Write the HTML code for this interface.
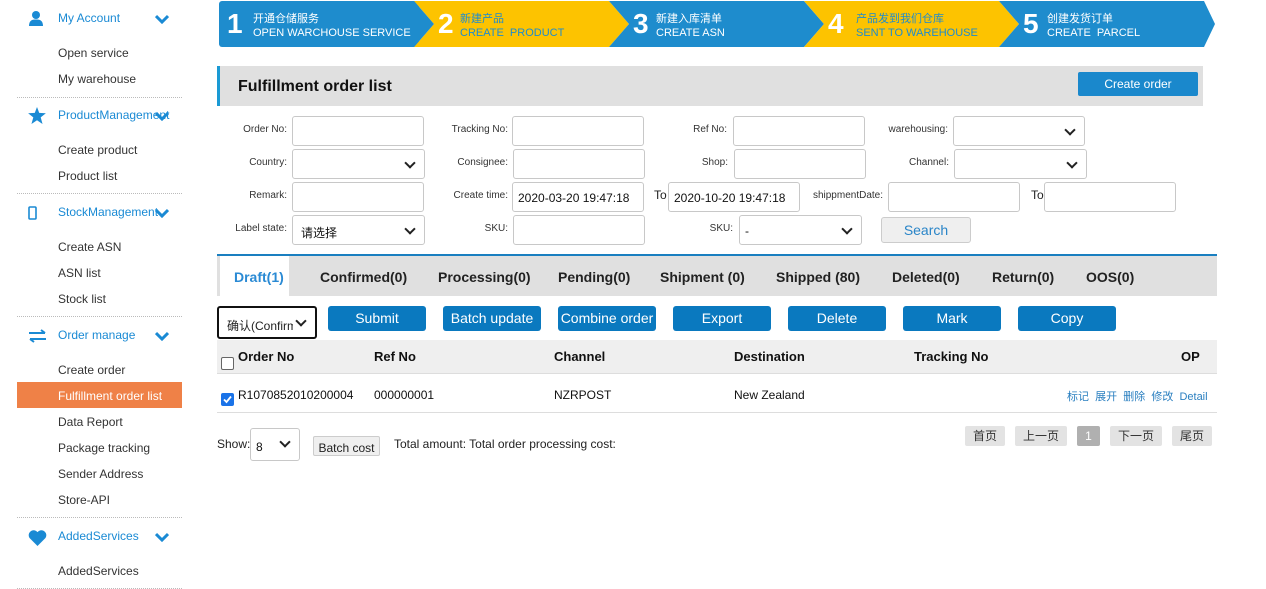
<!DOCTYPE html>
<html><head><meta charset="utf-8"><style>
*{box-sizing:border-box;margin:0;padding:0}
body{width:1266px;height:589px;position:relative;background:#fff;font-family:"Liberation Sans","Noto Sans CJK SC",sans-serif;color:#222;overflow:hidden;font-size:12px}
.a{position:absolute;white-space:nowrap}
.hd{color:#1a8ad4;font-size:12px}
.sub{font-size:12px;color:#333;left:58px}
.dot{position:absolute;left:17px;width:165px;border-top:1px dotted #bbb;height:0}
.chev{position:absolute;left:155px}
.lbl{font-size:10px;color:#333;text-align:right}
.inp{position:absolute;height:30px;border:1px solid #c8c8c8;border-radius:3px;background:#fff;font-size:12px;padding:8px 5px;color:#111;white-space:nowrap;overflow:hidden}
.sel:after{content:"";position:absolute;right:10px;top:9px;width:6px;height:6px;border-right:2px solid #222;border-bottom:2px solid #222;transform:rotate(45deg)}
.tab{position:absolute;top:269px;font-size:14px;font-weight:bold;color:#222}
.btn{position:absolute;top:306px;height:25px;width:98px;background:#0a79bf;color:#fff;border-radius:3px;font-size:14px;text-align:center;line-height:25px}
.th{position:absolute;top:349px;font-size:13px;font-weight:bold;color:#111}
.td{position:absolute;top:388px;font-size:12px;color:#111}
.pg{position:absolute;top:426px;height:20px;background:#e3e3e3;border-radius:2px;font-size:12px;text-align:center;line-height:20px;color:#333}
.op{color:#2a7fc0;font-size:11px}
</style></head><body>

<svg class="a" style="left:28px;top:10px" width="16" height="16" viewBox="0 0 16 16"><circle cx="8" cy="5" r="4" fill="#1a8ad4"/><path d="M1 16 Q1 9 8 9.5 Q15 9 15 16Z" fill="#1a8ad4"/></svg>
<div class="a hd" style="left:58px;top:11px">My Account</div>
<svg class="chev" style="top:14px" width="14" height="10"><path d="M1 2 L7 8 L13 2" stroke="#1a8ad4" stroke-width="3" fill="none"/></svg>
<div class="a sub" style="top:46px">Open service</div>
<div class="a sub" style="top:72px">My warehouse</div>
<div class="dot" style="top:97px"></div>

<svg class="a" style="left:28px;top:107px" width="18" height="17" viewBox="0 0 24 23"><path d="M12 0 L15 8 L24 8.5 L17 14 L19.5 23 L12 18 L4.5 23 L7 14 L0 8.5 L9 8Z" fill="#1a8ad4"/></svg>
<div class="a hd" style="left:58px;top:108px">ProductManagement</div>
<svg class="chev" style="top:111px" width="14" height="10"><path d="M1 2 L7 8 L13 2" stroke="#1a8ad4" stroke-width="3" fill="none"/></svg>
<div class="a sub" style="top:143px">Create product</div>
<div class="a sub" style="top:169px">Product list</div>
<div class="dot" style="top:193px"></div>

<svg class="a" style="left:28px;top:206px" width="9" height="14"><rect x="1" y="1" width="7" height="12" rx="1" fill="none" stroke="#1a8ad4" stroke-width="1.6"/></svg>
<div class="a hd" style="left:58px;top:205px">StockManagement</div>
<svg class="chev" style="top:208px" width="14" height="10"><path d="M1 2 L7 8 L13 2" stroke="#1a8ad4" stroke-width="3" fill="none"/></svg>
<div class="a sub" style="top:240px">Create ASN</div>
<div class="a sub" style="top:266px">ASN list</div>
<div class="a sub" style="top:292px">Stock list</div>
<div class="dot" style="top:316px"></div>

<svg class="a" style="left:28px;top:329px" width="19" height="14"><path d="M1 4 H17 M13 1 L17 4 M18 10 H2 M6 13 L2 10" stroke="#1a8ad4" stroke-width="2" fill="none"/></svg>
<div class="a hd" style="left:58px;top:328px">Order manage</div>
<svg class="chev" style="top:331px" width="14" height="10"><path d="M1 2 L7 8 L13 2" stroke="#1a8ad4" stroke-width="3" fill="none"/></svg>
<div class="a sub" style="top:363px">Create order</div>
<div class="a" style="left:17px;top:382px;width:165px;height:26px;background:#ef8147"></div>
<div class="a sub" style="top:389px;color:#fff">Fulfillment order list</div>
<div class="a sub" style="top:415px">Data Report</div>
<div class="a sub" style="top:441px">Package tracking</div>
<div class="a sub" style="top:467px">Sender Address</div>
<div class="a sub" style="top:493px">Store-API</div>
<div class="dot" style="top:517px"></div>

<svg class="a" style="left:28px;top:529px" width="19" height="17" viewBox="0 0 24 22"><path d="M12 22 L2 12 A6 6 0 0 1 12 4 A6 6 0 0 1 22 12Z" fill="#1a8ad4"/></svg>
<div class="a hd" style="left:58px;top:529px">AddedServices</div>
<svg class="chev" style="top:532px" width="14" height="10"><path d="M1 2 L7 8 L13 2" stroke="#1a8ad4" stroke-width="3" fill="none"/></svg>
<div class="a sub" style="top:564px">AddedServices</div>
<div class="dot" style="top:588px"></div>

<svg class="a" style="left:219px;top:1px" width="998" height="47">
<rect x="0" y="0" width="200" height="46" rx="3" fill="#1e8ccd"/>
<polygon points="195,0 390,0 410,23 390,46 195,46 215,23" fill="#fdc300"/>
<polygon points="180,0 195,0 215,23 195,46 180,46" fill="#1e8ccd"/>
<polygon points="390,0 585,0 605,23 585,46 390,46 410,23" fill="#1e8ccd"/>
<polygon points="585,0 780,0 800,23 780,46 585,46 605,23" fill="#fdc300"/>
<polygon points="780,0 985,0 996,23 985,46 780,46 800,23" fill="#1e8ccd"/>
</svg>
<div class="a" style="left:227px;top:8px;font-size:28px;font-weight:bold;color:#fff">1</div>
<div class="a" style="left:253px;top:12px;font-size:11px;color:#fff;line-height:14px">开通仓储服务<br>OPEN WARCHOUSE SERVICE</div>
<div class="a" style="left:438px;top:8px;font-size:28px;font-weight:bold;color:#fff">2</div>
<div class="a" style="left:460px;top:12px;font-size:11px;color:#1e8ccd;line-height:14px">新建产品<br>CREATE&nbsp; PRODUCT</div>
<div class="a" style="left:633px;top:8px;font-size:28px;font-weight:bold;color:#fff">3</div>
<div class="a" style="left:656px;top:12px;font-size:11px;color:#fff;line-height:14px">新建入库清单<br>CREATE ASN</div>
<div class="a" style="left:828px;top:8px;font-size:28px;font-weight:bold;color:#fff">4</div>
<div class="a" style="left:856px;top:12px;font-size:11px;color:#1e8ccd;line-height:14px">产品发到我们仓库<br>SENT TO WAREHOUSE</div>
<div class="a" style="left:1023px;top:8px;font-size:28px;font-weight:bold;color:#fff">5</div>
<div class="a" style="left:1047px;top:12px;font-size:11px;color:#fff;line-height:14px">创建发货订单<br>CREATE&nbsp; PARCEL</div>

<div class="a" style="left:217px;top:66px;width:986px;height:40px;background:#e0e0e0;border-left:3px solid #1a9ad4"></div>
<div class="a" style="left:238px;top:78px;font-size:16px;font-weight:bold;color:#111">Fulfillment order list</div>
<div class="a" style="left:1078px;top:72px;width:120px;height:24px;background:#1a88cc;color:#fff;font-size:12px;text-align:center;line-height:24px;border-radius:2px">Create order</div>

<div class="a lbl" style="left:200px;width:87px;top:124px">Order No:</div>
<div class="inp" style="left:292px;top:116px;width:132px"></div>
<div class="a lbl" style="left:400px;width:108px;top:124px">Tracking No:</div>
<div class="inp" style="left:512px;top:116px;width:132px"></div>
<div class="a lbl" style="left:640px;width:87px;top:124px">Ref No:</div>
<div class="inp" style="left:733px;top:116px;width:132px"></div>
<div class="a lbl" style="left:860px;width:88px;top:124px">warehousing:</div>
<div class="inp sel" style="left:953px;top:116px;width:132px"></div>

<div class="a lbl" style="left:200px;width:87px;top:157px">Country:</div>
<div class="inp sel" style="left:292px;top:149px;width:133px"></div>
<div class="a lbl" style="left:400px;width:108px;top:157px">Consignee:</div>
<div class="inp" style="left:513px;top:149px;width:132px"></div>
<div class="a lbl" style="left:640px;width:88px;top:157px">Shop:</div>
<div class="inp" style="left:734px;top:149px;width:132px"></div>
<div class="a lbl" style="left:860px;width:89px;top:157px">Channel:</div>
<div class="inp sel" style="left:954px;top:149px;width:133px"></div>

<div class="a lbl" style="left:200px;width:87px;top:190px">Remark:</div>
<div class="inp" style="left:292px;top:182px;width:132px"></div>
<div class="a lbl" style="left:400px;width:108px;top:190px">Create time:</div>
<div class="inp" style="left:512px;top:182px;width:132px">2020-03-20 19:47:18</div>
<div class="a" style="left:654px;top:188px;font-size:12px">To</div>
<div class="inp" style="left:668px;top:182px;width:132px">2020-10-20 19:47:18</div>
<div class="a lbl" style="left:800px;width:83px;top:190px">shippmentDate:</div>
<div class="inp" style="left:888px;top:182px;width:132px"></div>
<div class="a" style="left:1031px;top:188px;font-size:12px">To</div>
<div class="inp" style="left:1044px;top:182px;width:132px"></div>

<div class="a lbl" style="left:200px;width:87px;top:223px">Label state:</div>
<div class="inp sel" style="left:292px;top:215px;width:133px;padding-left:8px">请选择</div>
<div class="a lbl" style="left:400px;width:108px;top:223px">SKU:</div>
<div class="inp" style="left:513px;top:215px;width:132px"></div>
<div class="a lbl" style="left:660px;width:73px;top:223px">SKU:</div>
<div class="inp sel" style="left:739px;top:215px;width:123px">-</div>
<div class="a" style="left:881px;top:217px;width:90px;height:26px;background:#efefef;border:1px solid #ccc;border-radius:3px;color:#2a85c8;font-size:14px;text-align:center;line-height:24px">Search</div>

<div class="a" style="left:217px;top:254px;width:1000px;height:42px;background:#e0e0e0;border-top:2px solid #1a7fc0"></div>
<div class="a" style="left:220px;top:256px;width:69px;height:40px;background:#fff"></div>
<div class="tab" style="left:234px;color:#2a8ad4">Draft(1)</div>
<div class="tab" style="left:320px">Confirmed(0)</div>
<div class="tab" style="left:438px">Processing(0)</div>
<div class="tab" style="left:558px">Pending(0)</div>
<div class="tab" style="left:660px">Shipment (0)</div>
<div class="tab" style="left:776px">Shipped (80)</div>
<div class="tab" style="left:892px">Deleted(0)</div>
<div class="tab" style="left:992px">Return(0)</div>
<div class="tab" style="left:1086px">OOS(0)</div>

<div class="a sel" style="left:217px;top:306px;width:100px;height:33px;border:2px solid #111;border-radius:3px;font-size:12px;padding:9px 24px 0 8px;overflow:hidden"><span style="display:block;overflow:hidden;width:66px">确认(Confirm</span></div>
<div class="btn" style="left:328px">Submit</div>
<div class="btn" style="left:443px">Batch update</div>
<div class="btn" style="left:558px">Combine order</div>
<div class="btn" style="left:673px">Export</div>
<div class="btn" style="left:788px">Delete</div>
<div class="btn" style="left:903px">Mark</div>
<div class="btn" style="left:1018px">Copy</div>

<div class="a" style="left:217px;top:340px;width:1000px;height:34px;background:#efefef;border-bottom:1px solid #ddd"></div>
<div class="a" style="left:221px;top:357px;width:13px;height:13px;border:1px solid #666;border-radius:2px;background:#fff"></div>
<div class="th" style="left:238px">Order No</div>
<div class="th" style="left:374px">Ref No</div>
<div class="th" style="left:554px">Channel</div>
<div class="th" style="left:734px">Destination</div>
<div class="th" style="left:914px">Tracking No</div>
<div class="th" style="left:1181px">OP</div>
<div class="a" style="left:217px;top:412px;width:1000px;height:0;border-top:1px solid #ddd"></div>
<svg class="a" style="left:221px;top:393px" width="13" height="13"><rect width="13" height="13" rx="2" fill="#1a73e8"/><path d="M3 6.5 L5.5 9 L10 3.5" stroke="#fff" stroke-width="1.8" fill="none"/></svg>
<div class="td" style="left:238px">R1070852010200004</div>
<div class="td" style="left:374px">000000001</div>
<div class="td" style="left:554px">NZRPOST</div>
<div class="td" style="left:734px">New Zealand</div>
<div class="a op" style="left:1067px;top:388px">标记&nbsp;&nbsp;展开&nbsp;&nbsp;删除&nbsp;&nbsp;修改&nbsp;&nbsp;Detail</div>

<div class="a" style="left:217px;top:437px;font-size:12px">Show:</div>
<div class="inp sel" style="left:250px;top:428px;width:50px;height:33px;padding-top:11px">8</div>
<div class="a" style="left:313px;top:436px;width:67px;height:20px;background:#efefef;border:1px solid #ccc;border-radius:2px;font-size:12px;text-align:center;line-height:22px">Batch cost</div>
<div class="a" style="left:394px;top:437px;font-size:12px">Total amount: Total order processing cost:</div>
<div class="pg" style="left:965px;width:40px">首页</div>
<div class="pg" style="left:1015px;width:52px">上一页</div>
<div class="pg" style="left:1077px;width:23px;background:#b0b0b0;color:#fff">1</div>
<div class="pg" style="left:1110px;width:52px">下一页</div>
<div class="pg" style="left:1172px;width:40px">尾页</div>
</body></html>
